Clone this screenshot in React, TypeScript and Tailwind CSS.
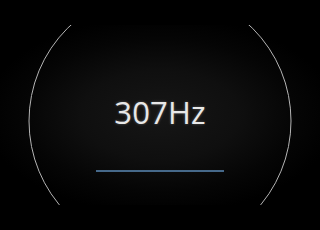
import React from 'react';

/**
 * Frequency readout: big Hz value over a thin progress line, framed by two arcs.
 */
export default function App() {
  const freq = 307;
  const progress = 1;

  return (
    <div className="w-[320px] h-[230px] bg-black overflow-hidden pt-[25px]">
      <div className="relative h-[180px] overflow-hidden bg-[radial-gradient(ellipse_at_center,#161616_0%,#0f0f0f_35%,#050505_60%,#000_78%)]">
        {/* Dial outline */}
        <svg className="absolute left-0 top-0" width="320" height="180" viewBox="0 0 320 180">
          <circle cx="160" cy="96" r="131" fill="none" stroke="#b4b4b4" strokeWidth="1" />
        </svg>

        <div className="relative flex flex-col items-center">
          <div
            className="mt-[68px] h-[38px] leading-[38px] text-[31px] text-[#e8e8e8] tracking-[0.2px] [text-shadow:0_0_3px_rgba(255,255,255,0.3)]"
            style={{ fontFamily: '"Open Sans", sans-serif' }}
          >
            {freq}Hz
          </div>
          <div className="mt-[39px] w-[128px] h-[2px] bg-[#2a3b4a]">
            <div className="h-full bg-[#46698a]" style={{ width: `${progress * 100}%` }} />
          </div>
        </div>
      </div>
    </div>
  );
}
